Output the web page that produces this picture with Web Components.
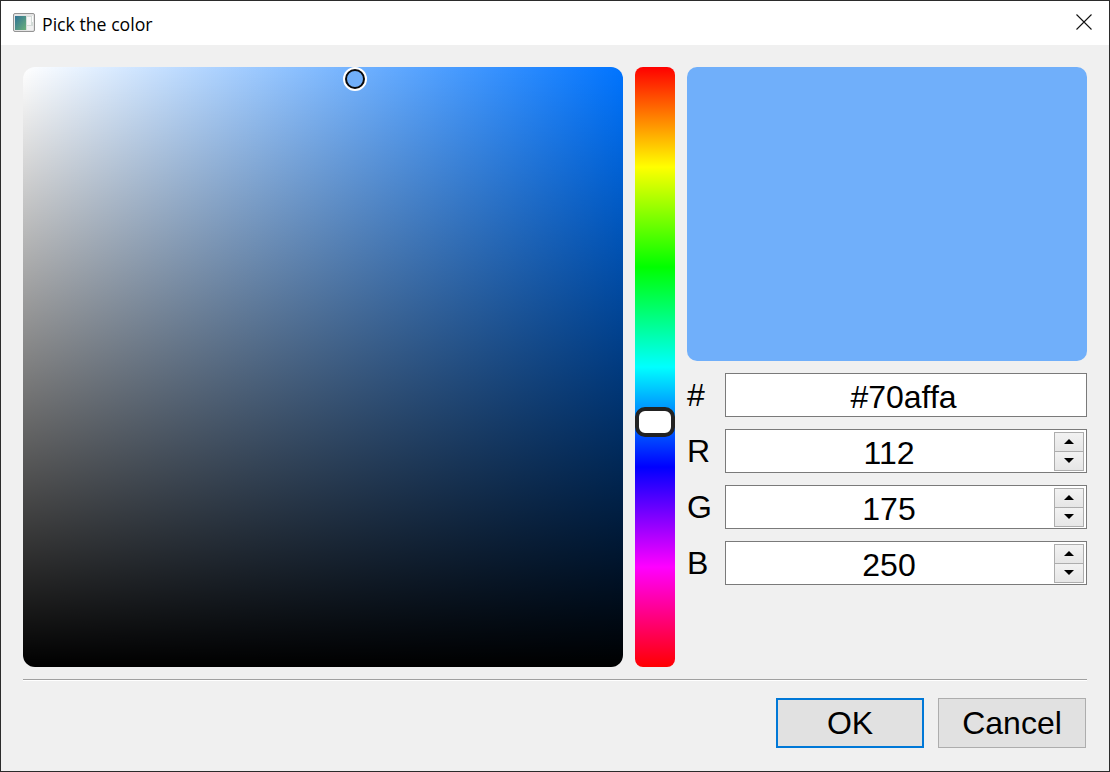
<!DOCTYPE html>
<html>
<head>
<meta charset="utf-8">
<title>Pick the color</title>
<style>
    html, body { margin: 0; padding: 0; background: #f0f0f0; }
</style>
</head>
<body>
<color-dialog></color-dialog>
<script>
class TitleBar extends HTMLElement {
    constructor() {
        super();
        this.attachShadow({ mode: 'open' }).innerHTML = `
            <style>
                :host {
                    display: flex;
                    align-items: center;
                    height: 44px;
                    background: #fff;
                    font: 17.7px "Open Sans", sans-serif;
                    color: #000;
                }
                .icon { width: 22px; height: 19px; margin: 0 7px 0 12px; flex: none; display: block; position: relative; top: -1px; }
                .text { flex: 1; position: relative; top: 1px; }
                .close { width: 18px; height: 18px; margin-right: 16px; flex: none; display: block; position: relative; top: -1px; }
            </style>
            <svg class="icon" viewBox="0 0 22 19">
                <defs>
                    <linearGradient id="g" x1="0" y1="0" x2="1" y2="1">
                        <stop offset="0" stop-color="#2f7396"/>
                        <stop offset="1" stop-color="#6cb07a"/>
                    </linearGradient>
                </defs>
                <rect x=".5" y=".5" width="21" height="18" rx="1.5" fill="#e4e4e4" stroke="#949494"/>
                <rect x="2" y="3" width="11" height="14" fill="url(#g)"/>
                <rect x="13" y="3" width="7" height="14" fill="#d4dcd8"/>
                <rect x="14" y="4" width="4" height="8" fill="#f7f7f7"/>
                <rect x="19" y="3" width="1" height="6" fill="#fdfdfd"/>
                <rect x="14" y="13" width="6" height="4" fill="#f0f0f0"/>
            </svg>
            <span class="text"><slot></slot></span>
            <svg class="close" viewBox="0 0 18 18">
                <path d="M1.5 1.5 L16.5 16.5 M16.5 1.5 L1.5 16.5" stroke="#111" stroke-width="1.1" fill="none"/>
            </svg>
        `;
    }
}
customElements.define('title-bar', TitleBar);

class SvPicker extends HTMLElement {
    constructor() {
        super();
        this.attachShadow({ mode: 'open' }).innerHTML = `
            <style>
                :host {
                    display: block;
                    position: relative;
                    width: 600px;
                    height: 600px;
                    border-radius: 12px;
                    background:
                        linear-gradient(to bottom, rgba(0,0,0,0), #000),
                        linear-gradient(to right, #fff, #0074ff);
                }
                .handle {
                    position: absolute;
                    left: 320px;
                    top: 0;
                    width: 24px;
                    height: 24px;
                    box-sizing: border-box;
                    border-radius: 50%;
                    border: 2px solid #fff;
                    background: #fff;
                }
                .handle::after {
                    content: "";
                    display: block;
                    width: 20px;
                    height: 20px;
                    box-sizing: border-box;
                    border-radius: 50%;
                    border: 2.5px solid #0a0a0a;
                    background: #70affa;
                }
            </style>
            <div class="handle"></div>
        `;
    }
}
customElements.define('sv-picker', SvPicker);

class HueSlider extends HTMLElement {
    constructor() {
        super();
        this.attachShadow({ mode: 'open' }).innerHTML = `
            <style>
                :host {
                    display: block;
                    position: relative;
                    width: 40px;
                    height: 600px;
                    border-radius: 8px;
                    background: linear-gradient(to bottom, #f00, #ff0, #0f0, #0ff, #00f, #f0f, #f00);
                }
                .handle {
                    position: absolute;
                    left: 0;
                    top: 340px;
                    width: 40px;
                    height: 30px;
                    box-sizing: border-box;
                    border: 4px solid #222;
                    border-radius: 10px;
                    background: #fff;
                }
            </style>
            <div class="handle"></div>
        `;
    }
}
customElements.define('hue-slider', HueSlider);

class SpinArrows extends HTMLElement {
    constructor() {
        super();
        this.attachShadow({ mode: 'open' }).innerHTML = `
            <style>
                :host {
                    display: grid;
                    grid-template-rows: 20px 19px;
                    width: 30px;
                    flex: none;
                }
                .btn {
                    display: flex;
                    align-items: center;
                    justify-content: center;
                    box-sizing: border-box;
                    border: 1px solid #adadad;
                    background: linear-gradient(#f2f2f2, #e6e6e6);
                }
                .btn + .btn { border-top: 0; }
                svg { display: block; width: 10px; height: 5px; }
            </style>
            <div class="btn"><svg viewBox="0 0 10 5"><path d="M5 0 L10 5 H0 Z" fill="#000"/></svg></div>
            <div class="btn"><svg viewBox="0 0 10 5"><path d="M0 0 H10 L5 5 Z" fill="#000"/></svg></div>
        `;
    }
}
customElements.define('spin-arrows', SpinArrows);

class ColorField extends HTMLElement {
    constructor() {
        super();
        const spin = this.hasAttribute('spin');
        this.attachShadow({ mode: 'open' }).innerHTML = `
            <style>
                :host {
                    display: grid;
                    grid-template-columns: 38px 362px;
                    height: 44px;
                    font: 32px "Liberation Sans", Arial, sans-serif;
                    color: #000;
                }
                .label { line-height: 44px; }
                .box {
                    display: flex;
                    align-items: center;
                    box-sizing: border-box;
                    height: 44px;
                    padding-right: 2px;
                    border: 1px solid #7a7a7a;
                    background: #fff;
                }
                .value { flex: 1; text-align: center; padding-right: ${spin ? '2px' : '3px'}; position: relative; top: 2px; }
            </style>
            <span class="label">${this.getAttribute('label')}</span>
            <div class="box">
                <span class="value"><slot></slot></span>
                ${spin ? '<spin-arrows></spin-arrows>' : ''}
            </div>
        `;
    }
}
customElements.define('color-field', ColorField);

class DialogButton extends HTMLElement {
    constructor() {
        super();
        this.attachShadow({ mode: 'open' }).innerHTML = `
            <style>
                :host {
                    display: flex;
                    align-items: center;
                    justify-content: center;
                    box-sizing: border-box;
                    width: 148px;
                    height: 50px;
                    border: 1px solid #adadad;
                    background: #e1e1e1;
                    font: 32px "Liberation Sans", Arial, sans-serif;
                    color: #000;
                }
                :host([default]) { border: 2px solid #0078d7; }
            </style>
            <slot></slot>
        `;
    }
}
customElements.define('dialog-button', DialogButton);

class ColorDialog extends HTMLElement {
    constructor() {
        super();
        this.attachShadow({ mode: 'open' }).innerHTML = `
            <style>
                :host {
                    display: block;
                    box-sizing: border-box;
                    width: 1110px;
                    height: 772px;
                    border: 1px solid #2b2b2b;
                    background: #f0f0f0;
                    overflow: hidden;
                }
                .content { padding: 22px 22px 0; }
                .pickers {
                    display: grid;
                    grid-template-columns: 600px 40px 400px;
                    column-gap: 12px;
                    height: 600px;
                }
                .side { display: flex; flex-direction: column; gap: 12px; }
                .preview { height: 294px; border-radius: 10px; background: #70affa; }
                hr {
                    margin: 12px 0 0;
                    height: 1px;
                    border: 0;
                    background: #a0a0a0;
                    box-shadow: 0 1px 0 #fff;
                }
                .buttons {
                    display: flex;
                    justify-content: flex-end;
                    gap: 14px;
                    padding: 18px 1px 0 0;
                }
            </style>
            <title-bar>Pick the color</title-bar>
            <div class="content">
                <div class="pickers">
                    <sv-picker></sv-picker>
                    <hue-slider></hue-slider>
                    <div class="side">
                        <div class="preview"></div>
                        <color-field label="#">#70affa</color-field>
                        <color-field label="R" spin>112</color-field>
                        <color-field label="G" spin>175</color-field>
                        <color-field label="B" spin>250</color-field>
                    </div>
                </div>
                <hr>
                <div class="buttons">
                    <dialog-button default>OK</dialog-button>
                    <dialog-button>Cancel</dialog-button>
                </div>
            </div>
        `;
    }
}
customElements.define('color-dialog', ColorDialog);
</script>
</body>
</html>
